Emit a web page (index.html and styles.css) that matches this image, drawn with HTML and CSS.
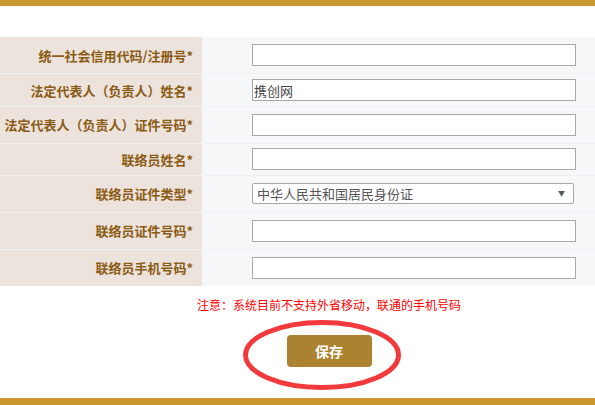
FILE: index.html
```html
<!DOCTYPE html>
<html lang="zh-CN">
<head>
<meta charset="utf-8">
<title>联络员信息</title>
<link rel="stylesheet" href="styles.css">
</head>
<body>
<div class="topbar"></div>
<div class="content">
  <table class="form">
    <tr class="row">
      <td class="label">统一社会信用代码/注册号*</td>
      <td class="field"><input class="text" type="text" value=""></td>
    </tr>
    <tr class="row row-short">
      <td class="label">法定代表人（负责人）姓名*</td>
      <td class="field"><input class="text" type="text" value="携创网"></td>
    </tr>
    <tr class="row">
      <td class="label">法定代表人（负责人）证件号码*</td>
      <td class="field"><input class="text" type="text" value=""></td>
    </tr>
    <tr class="row row-short">
      <td class="label">联络员姓名*</td>
      <td class="field"><input class="text" type="text" value=""></td>
    </tr>
    <tr class="row">
      <td class="label">联络员证件类型*</td>
      <td class="field">
        <div class="select">
          <span class="select-text">中华人民共和国居民身份证</span>
          <span class="select-arrow">▼</span>
        </div>
      </td>
    </tr>
    <tr class="row">
      <td class="label">联络员证件号码*</td>
      <td class="field"><input class="text" type="text" value=""></td>
    </tr>
    <tr class="row">
      <td class="label">联络员手机号码*</td>
      <td class="field"><input class="text" type="text" value=""></td>
    </tr>
  </table>
  <p class="note">注意：系统目前不支持外省移动，联通的手机号码</p>
  <div class="actions">
    <button class="save" type="button">保存</button>
  </div>
</div>
<div class="bottombar"></div>
<svg class="mark" width="166" height="76" viewBox="0 0 166 76">
  <ellipse cx="81" cy="37" rx="76.5" ry="32.5" fill="none" stroke="#f23a3c" stroke-width="5"/>
</svg>
</body>
</html>
```
FILE: styles.css
```css
html, body {
  margin: 0;
  padding: 0;
  background: #ffffff;
}
body {
  width: 595px;
  height: 405px;
  overflow: hidden;
  position: relative;
  font-family: "Noto Sans CJK SC", "Noto Sans", sans-serif;
}
.topbar {
  height: 6px;
  background: #c9982f;
}
.content {
  padding-top: 31px;
  height: 361px;
}
.form {
  width: 595px;
  border-collapse: collapse;
  border-spacing: 0;
}
.row td {
  height: 36.8px;
  padding: 0;
  border-top: 1px solid #eff0f3;
  box-sizing: border-box;
  vertical-align: middle;
}
.row:first-child td {
  border-top: none;
}
.row-short td {
  height: 32.5px;
}
.label {
  width: 202px;
  background: #ebe3dc;
  text-align: right;
  padding-right: 9px !important;
  color: #8c5b14;
  font-size: 13px;
  font-weight: bold;
  white-space: nowrap;
  box-sizing: border-box;
}
.field {
  background: #f6f7f9;
  padding-left: 50px !important;
}
.text {
  display: block;
  width: 324px;
  height: 22px;
  box-sizing: border-box;
  border: 1px solid #a8a8a8;
  background: #ffffff;
  padding: 0 1px;
  margin: 0;
  font-family: "Noto Sans CJK SC", "Noto Sans", sans-serif;
  font-size: 13px;
  color: #444444;
  outline: none;
}
.select {
  width: 322px;
  height: 21px;
  box-sizing: border-box;
  border: 1px solid #a8a8a8;
  border-radius: 2px;
  background: #ffffff;
  display: flex;
  align-items: center;
  justify-content: space-between;
  padding: 0 8px 0 4px;
}
.select-text {
  font-size: 13px;
  color: #555555;
  line-height: 1;
}
.select-arrow {
  font-size: 7px;
  color: #555555;
  line-height: 1;
}
.note {
  margin: 11px 0 0;
  padding-left: 63px;
  text-align: center;
  font-size: 12px;
  line-height: 16px;
  color: #ff0000;
}
.actions {
  padding-left: 63px;
  margin-top: 22px;
  display: flex;
  justify-content: center;
}
.save {
  width: 85px;
  height: 32px;
  border: none;
  border-radius: 4px;
  background: #ab822f;
  color: #ffffff;
  font-family: "Noto Sans CJK SC", "Noto Sans", sans-serif;
  font-size: 14px;
  font-weight: bold;
  padding: 0;
}
.bottombar {
  position: absolute;
  left: 0;
  bottom: 0;
  width: 595px;
  height: 7px;
  background: #c8972f;
}
.mark {
  position: absolute;
  left: 241px;
  top: 318px;
}
```
